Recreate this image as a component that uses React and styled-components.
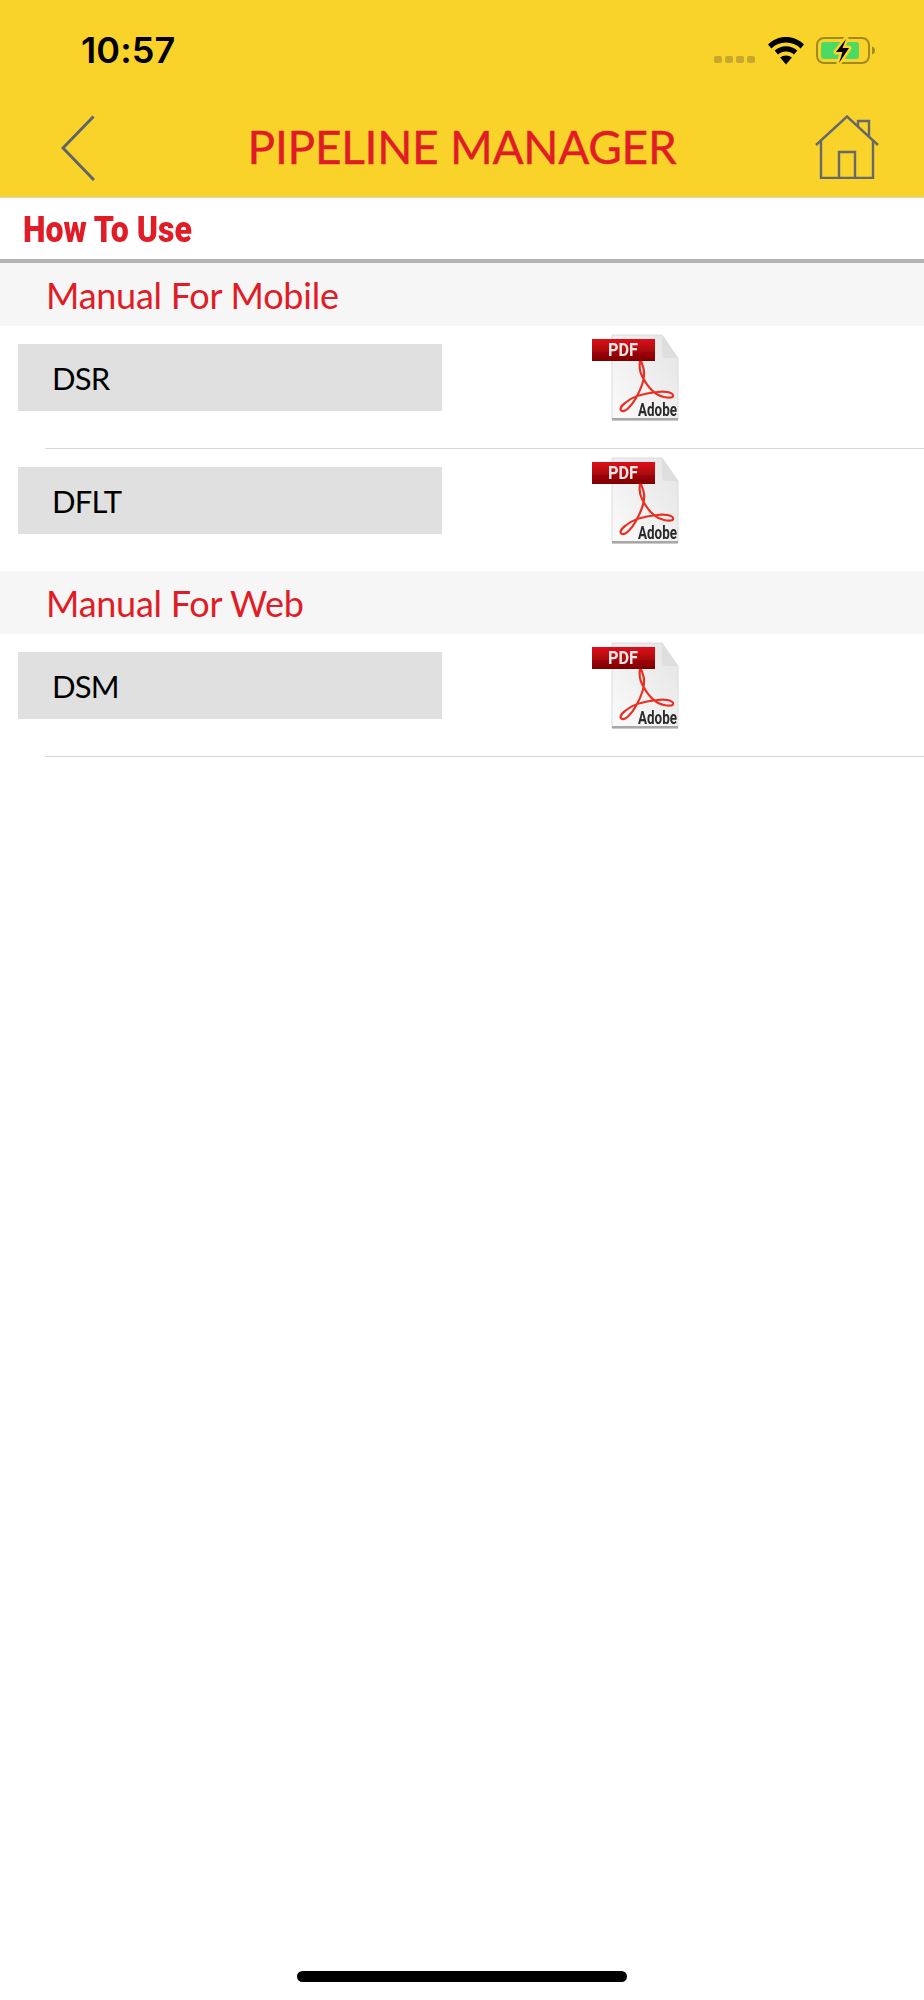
import React from "react";
import styled, { createGlobalStyle } from "styled-components";

const GlobalStyle = createGlobalStyle`
  html, body {
    margin: 0;
    padding: 0;
    background: #fff;
  }
`;

const Page = styled.div`
  width: 924px;
  height: 2000px;
  display: flex;
  flex-direction: column;
  background: #fff;
  font-family: Lato, "Liberation Sans", sans-serif;
`;

const Header = styled.header`
  height: 197px;
  background: #fad32a;
  border-bottom: 1px solid #d9d6c8;
`;

const StatusBar = styled.div`
  height: 100px;
  display: flex;
  align-items: flex-start;
  padding: 0 48px 0 81px;
  box-sizing: border-box;
`;

const Time = styled.span`
  margin-top: 29px;
  font-family: Inter, sans-serif;
  font-size: 36px;
  line-height: 43px;
  font-weight: 600;
  letter-spacing: 0.1px;
  color: #000;
`;

const StatusIcons = styled.div`
  margin-left: auto;
  display: flex;
  align-items: flex-start;
  padding-top: 37px;
`;

const Dots = styled.div`
  display: flex;
  gap: 3px;
  margin: 19px 12px 0 0;
`;

const Dot = styled.i`
  width: 8px;
  height: 7px;
  border-radius: 2px;
  background: #c7a82d;
`;

const NavBar = styled.div`
  height: 97px;
  display: grid;
  grid-template-columns: 1fr auto 1fr;
  align-items: start;
  padding: 15px 45px 0;
  box-sizing: border-box;
`;

const NavEnd = styled.div`
  justify-self: ${(p) => (p.$right ? "end" : "start")};
  margin-left: ${(p) => (p.$right ? "0" : "16px")};
  line-height: 0;
`;

const Title = styled.h1`
  margin: 6px 0 0;
  font-size: 46px;
  line-height: 52px;
  font-weight: 400;
  color: #e01d26;
  letter-spacing: -0.25px;
  -webkit-text-stroke: 0.4px #e01d26;
`;

const PageHead = styled.div`
  height: 61px;
  border-bottom: 4px solid #b4b4b4;
  display: flex;
  align-items: center;
  padding: 2px 0 0 23px;
  box-sizing: content-box;
  height: 59px;
`;

const PageHeadText = styled.span`
  font-family: Roboto, "Liberation Sans", sans-serif;
  font-size: 36px;
  font-weight: 900;
  color: #e01d26;
  transform: scaleX(0.89);
  transform-origin: left center;
  white-space: nowrap;
`;

const SectionTitle = styled.div`
  height: 63px;
  background: #f6f6f6;
  display: flex;
  align-items: center;
  padding-left: 46px;
  font-size: 36px;
  letter-spacing: -0.25px;
  color: #e01d26;
`;

const Row = styled.div`
  height: 122px;
  display: flex;
  align-items: flex-start;
`;

const Label = styled.div`
  width: 424px;
  height: 67px;
  margin: 18px 0 0 18px;
  padding-left: 34px;
  box-sizing: border-box;
  display: flex;
  align-items: center;
  background: #e0e0e0;
  font-size: 31px;
  letter-spacing: -0.8px;
  color: #000;
`;

const PdfLink = styled.a`
  display: block;
  margin: 8px 0 0 150px;
  line-height: 0;
`;

const Separator = styled.div`
  height: 1px;
  margin-left: 45px;
  background: #d8d8dc;
`;

const HomeBar = styled.div`
  width: 330px;
  height: 11px;
  margin: auto auto 18px;
  border-radius: 6px;
  background: #000;
`;

const Wifi = () => (
  <svg width="38" height="28" viewBox="0 0 38 28" style={{ marginRight: 11 }}>
    <path d="M19 0C12 0 6 2.6 1 7.4l3.4 4C8.4 7.7 13.4 5.6 19 5.6s10.6 2.1 14.6 5.8l3.4-4C32 2.6 26 0 19 0z" fill="#000" />
    <path d="M19 9.2c-4.4 0-8.3 1.6-11.4 4.4l3.4 4c2.2-1.8 5-3 8-3s5.8 1.2 8 3l3.4-4C27.3 10.8 23.4 9.2 19 9.2z" fill="#000" />
    <path d="M19 18.4c-2.3 0-4.3.8-5.9 2.2L19 27.6l5.9-7C23.3 19.2 21.3 18.4 19 18.4z" fill="#000" />
  </svg>
);

const Battery = () => (
  <svg width="60" height="27" viewBox="0 0 60 27">
    <rect x="1" y="1" width="52" height="25" rx="7" fill="none" stroke="#a08a24" strokeWidth="2" />
    <rect x="5" y="5" width="38" height="17" rx="3" fill="#4cd964" />
    <path d="M56 9.5c2 .6 3 2 3 4s-1 3.4-3 4z" fill="#a08a24" />
    <path d="M30 2L20 15h6.5L23 26l10-15h-6.5z" fill="#000" stroke="#fad32a" strokeWidth="5" strokeLinejoin="round" />
    <path d="M30 2L20 15h6.5L23 26l10-15h-6.5z" fill="#000" />
  </svg>
);

const BackIcon = () => (
  <svg width="34" height="66" viewBox="0 0 34 66">
    <path d="M32.5 1.5L2 33l31 32" fill="none" stroke="#5f6468" strokeWidth="3" />
  </svg>
);

const HomeIcon = () => (
  <svg width="64" height="64" viewBox="0 0 64 64">
    <g fill="none" stroke="#66686a" strokeWidth="2.4">
      <path d="M1 30L32 1.5 63 30" />
      <path d="M43 11V6h11v15" />
      <path d="M6 25v38h52V25" />
      <path d="M24 63V37h16v26" />
    </g>
  </svg>
);

const PdfIcon = ({ id }) => (
  <svg width="104" height="88" viewBox="0 0 104 88">
    <defs>
      <linearGradient id={`banner${id}`} x1="0" y1="0" x2="0" y2="1">
        <stop offset="0" stopColor="#e0101a" />
        <stop offset="1" stopColor="#7a0000" />
      </linearGradient>
      <linearGradient id={`sheet${id}`} x1="1" y1="0" x2="0" y2="1">
        <stop offset="0" stopColor="#e4e4e4" />
        <stop offset="1" stopColor="#fbfbfb" />
      </linearGradient>
      <filter id={`soft${id}`} x="-5%" y="-5%" width="110%" height="110%">
        <feGaussianBlur stdDeviation="0.6" />
      </filter>
    </defs>
    <g filter={`url(#soft${id})`}>
      <path d="M20 1h50l16 23v62H20z" fill={`url(#sheet${id})`} stroke="#dcdcdc" />
      <path d="M70 1l16 23H72l-2-3z" fill="#dedede" />
      <rect x="20" y="84" width="66" height="2.5" fill="#a8a8a8" />
      <rect x="0" y="5" width="63" height="22" fill={`url(#banner${id})`} />
      <text x="16" y="22" textLength="30" lengthAdjust="spacingAndGlyphs" fontFamily="Roboto, sans-serif" fontWeight="700" fontSize="18" fill="#f6e6e6">PDF</text>
      <path
        d="M48 27c-1 6 0 11 2 15 5 10 12 19 22 21 5 1 10 1 9-2-1-3-9-4-16-3-11 1-24 4-32 11-4 3-6 7-3 8 4 1 10-6 14-13 5-9 9-19 8-27-.5-4-2-7-3-10"
        fill="none"
        stroke="#ea2f22"
        strokeWidth="2.2"
      />
      <text x="46" y="82" textLength="39" lengthAdjust="spacingAndGlyphs" fontFamily="Roboto, sans-serif" fontWeight="700" fontSize="19" fill="#2a2a2a">Adobe</text>
    </g>
  </svg>
);

const sections = [
  { title: "Manual For Mobile", items: ["DSR", "DFLT"] },
  { title: "Manual For Web", items: ["DSM"] },
];

const App = () => {
  return (
    <Page>
      <GlobalStyle />
      <Header>
        <StatusBar>
          <Time>10:57</Time>
          <StatusIcons>
            <Dots>
              <Dot />
              <Dot />
              <Dot />
              <Dot />
            </Dots>
            <Wifi />
            <Battery />
          </StatusIcons>
        </StatusBar>
        <NavBar>
          <NavEnd>
            <BackIcon />
          </NavEnd>
          <Title>PIPELINE MANAGER</Title>
          <NavEnd $right>
            <HomeIcon />
          </NavEnd>
        </NavBar>
      </Header>
      <PageHead>
        <PageHeadText>How To Use</PageHeadText>
      </PageHead>
      {sections.map((section) => (
        <section key={section.title}>
          <SectionTitle>{section.title}</SectionTitle>
          {section.items.map((item, i) => (
            <React.Fragment key={item}>
              <Row>
                <Label>{item}</Label>
                <PdfLink>
                  <PdfIcon id={item} />
                </PdfLink>
              </Row>
              {i === 0 && <Separator />}
            </React.Fragment>
          ))}
        </section>
      ))}
      <HomeBar />
    </Page>
  );
};

export default App;
